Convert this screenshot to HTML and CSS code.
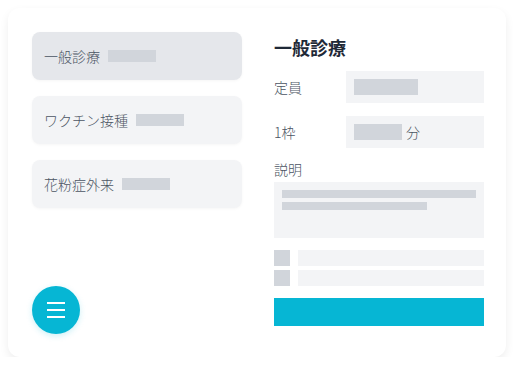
FILE: index.html
```html
<!DOCTYPE html>
<html lang="ja">
<head>
<meta charset="utf-8">
<link rel="stylesheet" href="styles.css">
</head>
<body>
<div class="card">
  <div class="left">
    <ul class="list">
      <li class="item active"><span class="name">一般診療</span><span class="ph ph-48"></span></li>
      <li class="item"><span class="name">ワクチン接種</span><span class="ph ph-48"></span></li>
      <li class="item"><span class="name">花粉症外来</span><span class="ph ph-48"></span></li>
    </ul>
    <button class="fab" aria-label="menu">
      <svg width="18" height="16" viewBox="0 0 18 16"><path d="M0 1h18M0 8h18M0 15h18" stroke="#fff" stroke-width="2"/></svg>
    </button>
  </div>
  <div class="right">
    <h2 class="title">一般診療</h2>
    <div class="row">
      <span class="label">定員</span>
      <div class="field"><span class="ph ph-64"></span></div>
    </div>
    <div class="row row2">
      <span class="label">1枠</span>
      <div class="field"><span class="ph ph-48"></span><span class="unit">分</span></div>
    </div>
    <div class="desc-label">説明</div>
    <div class="textarea">
      <span class="line l1"></span>
      <span class="line l2"></span>
    </div>
    <div class="checks">
      <div class="check"><span class="box"></span><span class="cbar"></span></div>
      <div class="check"><span class="box"></span><span class="cbar"></span></div>
    </div>
    <div class="btn"></div>
  </div>
</div>
</body>
</html>
```
FILE: styles.css
```css
* { box-sizing: border-box; }
html, body { margin: 0; padding: 0; }
body {
  background: #ffffff;
  font-family: "Noto Sans CJK JP", "Noto Sans", sans-serif;
  padding: 8px 10px 0 8px;
}
.card {
  width: 498px;
  height: 349px;
  background: #fff;
  border-radius: 12px;
  box-shadow: 0 4px 10px rgba(0,0,0,0.07);
  display: flex;
  gap: 32px;
  padding: 24px 22px 23px 24px;
}
.left {
  width: 210px;
  flex: none;
  display: flex;
  flex-direction: column;
  justify-content: space-between;
}
.list {
  list-style: none;
  margin: 0;
  padding: 0;
  display: flex;
  flex-direction: column;
  gap: 16px;
}
.item {
  height: 48px;
  border-radius: 8px;
  background: #f3f4f6;
  display: flex;
  align-items: center;
  padding: 0 12px;
  gap: 8px;
  font-size: 14px;
  font-weight: 300;
  color: #4b5563;
  box-shadow: 0 1px 3px rgba(0,0,0,0.04);
}
.item.active { background: #e5e7eb; }
.ph {
  display: inline-block;
  background: #d1d5db;
  height: 12px;
}
.ph-48 { width: 48px; }
.ph-64 { width: 64px; height: 16px; }
.fab {
  width: 48px;
  height: 48px;
  border-radius: 50%;
  border: none;
  background: #06b6d4;
  display: flex;
  align-items: center;
  justify-content: center;
  padding: 0;
  box-shadow: 0 2px 6px rgba(6,182,212,0.2);
}
.right {
  width: 210px;
  flex: none;
  display: flex;
  flex-direction: column;
}
.title {
  margin: 0;
  font-size: 18px;
  line-height: 26px;
  height: 26px;
  margin-top: 2px;
  font-weight: 700;
  color: #1f2937;
}
.row {
  display: flex;
  align-items: center;
  margin-top: 11px;
  height: 32px;
}
.row2 { margin-top: 13px; }
.label {
  width: 72px;
  font-size: 14px;
  font-weight: 300;
  color: #4b5563;
}
.field {
  flex: 1;
  height: 32px;
  background: #f3f4f6;
  display: flex;
  align-items: center;
  padding-left: 8px;
  gap: 4px;
}
.field .ph-48 { height: 16px; }
.unit { font-size: 14px; font-weight: 300; color: #4b5563; }
.desc-label {
  margin-top: 11px;
  font-size: 14px;
  font-weight: 300;
  line-height: 20px;
  color: #4b5563;
}
.textarea {
  margin-top: 3px;
  height: 56px;
  background: #f3f4f6;
  padding: 8px;
  display: flex;
  flex-direction: column;
  gap: 4px;
}
.line { display: block; height: 8px; background: #d1d5db; }
.l1 { width: 194px; }
.l2 { width: 145px; }
.checks {
  margin-top: 12px;
  display: flex;
  flex-direction: column;
  gap: 4px;
}
.check { display: flex; gap: 8px; height: 16px; }
.box { width: 16px; height: 16px; background: #d1d5db; }
.cbar { flex: 1; height: 16px; background: #f3f4f6; }
.btn {
  margin-top: 12px;
  height: 28px;
  background: #06b6d4;
}
```
